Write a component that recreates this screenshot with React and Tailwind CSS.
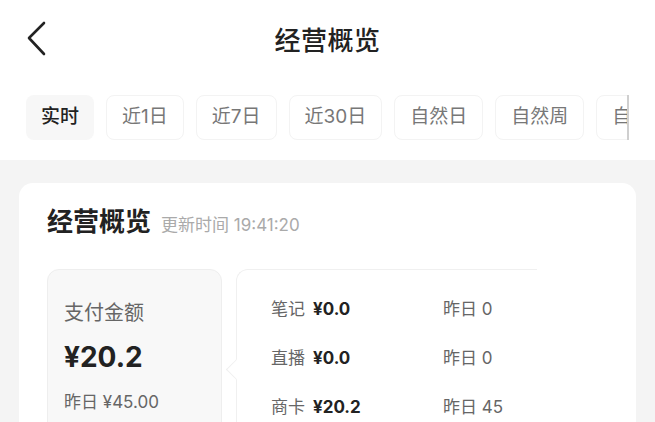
import React from 'react';

const tabs = ['实时', '近1日', '近7日', '近30日', '自然日', '自然周', '自然月'];

const rows = [
  { name: '笔记', value: '¥0.0', prev: '昨日 0' },
  { name: '直播', value: '¥0.0', prev: '昨日 0' },
  { name: '商卡', value: '¥20.2', prev: '昨日 45' },
];

export default function App() {
  return (
    <div
      className="w-[655px] h-[422px] overflow-hidden bg-[#f4f4f4] text-[#222]"
      style={{ fontFamily: 'Inter, "Noto Sans CJK SC", sans-serif' }}
    >
      <div className="bg-white">
        {/* header */}
        <div className="relative h-[80px] flex items-center justify-center">
          <svg className="absolute left-[26px] top-[21px]" width="22" height="36" viewBox="0 0 22 36">
            <path d="M18 2 L3 17 L18 33" fill="none" stroke="#222" strokeWidth="2.6" strokeLinecap="round" strokeLinejoin="round" />
          </svg>
          <h1 className="text-[26px] font-medium tracking-[0.5px]">经营概览</h1>
        </div>

        {/* tabs */}
        <div className="relative flex gap-[12px] pl-[26px] pt-[15px] pb-[20px] overflow-hidden w-[629px]">
          {tabs.map((t, i) => (
            <div
              key={t}
              className={
                i === 0
                  ? 'shrink-0 h-[45px] px-[15px] flex items-center rounded-[8px] bg-[#f7f7f7] text-[19px] font-medium text-[#222]'
                  : 'shrink-0 h-[45px] px-[15px] flex items-center rounded-[8px] border border-[#f3f3f3] text-[19px] text-[#777]'
              }
            >
              {t}
            </div>
          ))}
          <div className="absolute right-0 top-[15px] h-[45px] w-[2px] bg-[#cfcfcf]" />
        </div>
      </div>

      {/* card */}
      <div className="pt-[23px] px-[19px]">
        <div className="bg-white rounded-[14px] pt-[22px] px-[28px] h-[300px]">
          <div className="flex items-end gap-[10px]">
            <h2 className="text-[26px] font-bold leading-[34px]">经营概览</h2>
            <span className="text-[17px] text-[#aaa] leading-[28px]">更新时间 19:41:20</span>
          </div>

          <div className="flex mt-[30px]">
            <div className="w-[175px] h-[200px] shrink-0 rounded-[12px] bg-[#f8f8f8] border border-[#eeeeee] pl-[16px] pt-[29px]">
              <div className="text-[20px] text-[#666] leading-[28px]">支付金额</div>
              <div className="text-[28px] font-bold leading-[36px] mt-[12px]">¥20.2</div>
              <div className="text-[17px] text-[#666] leading-[24px] mt-[15px]">昨日 ¥45.00</div>
            </div>

            <div className="relative ml-[14px] flex-1 h-[200px] rounded-tl-[12px] border-l border-t border-[#f0f0f0] pl-[34px] pt-[25px]">
              <div className="absolute -left-[8px] top-[92px] w-[15px] h-[15px] rotate-45 bg-white border-l border-b border-[#f0f0f0]" />
              <div className="absolute -top-px left-[300px] right-0 h-[2px] bg-white" />
              <div className="flex flex-col gap-[20px]">
                {rows.map(r => (
                  <div key={r.name} className="flex items-center h-[29px]">
                    <div className="w-[172px] flex items-center gap-[8px]">
                      <span className="text-[17px] text-[#666]">{r.name}</span>
                      <span className="text-[17px] font-bold text-[#222]">{r.value}</span>
                    </div>
                    <span className="text-[17px] text-[#666]">{r.prev}</span>
                  </div>
                ))}
              </div>
            </div>
          </div>
        </div>
      </div>
    </div>
  );
}
